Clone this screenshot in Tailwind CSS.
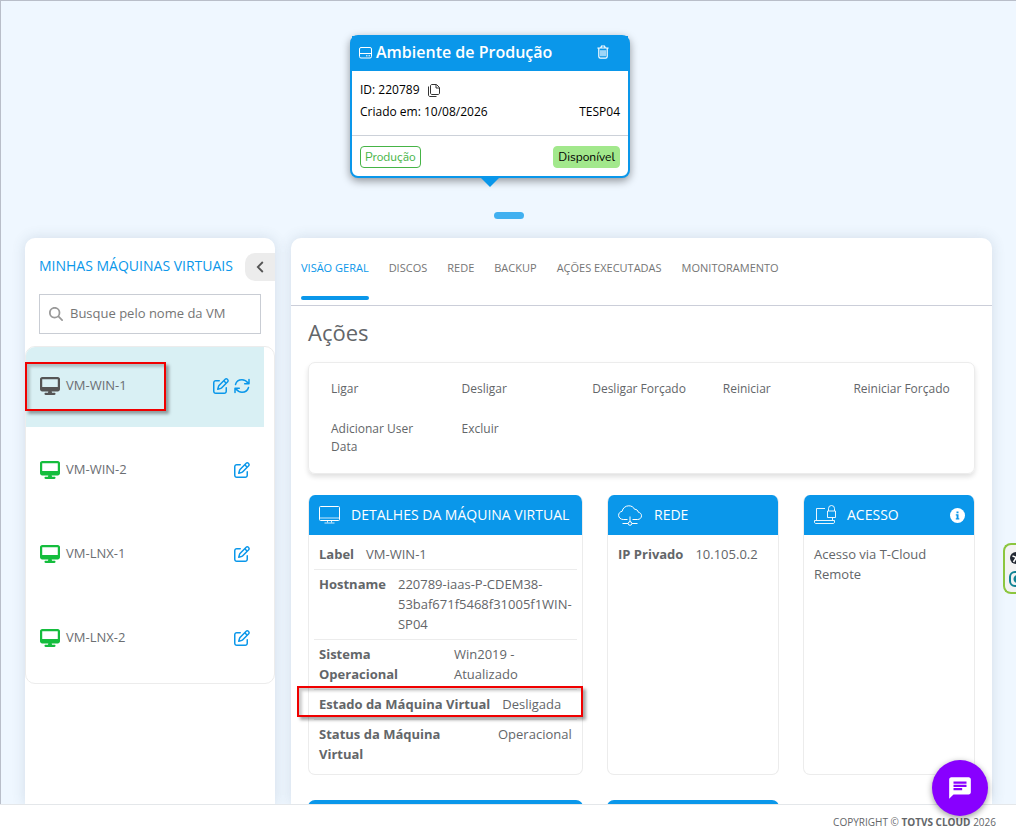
<!DOCTYPE html>
<html lang="pt-BR">
<head>
<meta charset="utf-8">
<meta name="viewport" content="width=device-width, initial-scale=1">
<title>TOTVS Cloud</title>
<script src="https://cdn.jsdelivr.net/npm/@tailwindcss/browser@4"></script>
</head>
<body class="flex h-screen flex-col overflow-hidden bg-white font-['Open_Sans','Noto_Sans',sans-serif] text-[13px] text-[#636669]">
<svg class="hidden" aria-hidden="true">
  <symbol id="desktop" viewBox="0 0 576 512"><path fill="currentColor" d="M64 0C28.7 0 0 28.7 0 64V352c0 35.3 28.7 64 64 64H240l-10.7 32H160c-17.7 0-32 14.3-32 32s14.3 32 32 32H416c17.7 0 32-14.3 32-32s-14.3-32-32-32H346.700L336 416H512c35.300 0 64-28.700 64-64V64c0-35.300-28.700-64-64-64H64zM512 64V288H64V64H512z"/></symbol>
  <symbol id="edit" viewBox="0 0 512 512"><path fill="currentColor" d="M441 58.9L453.1 71c9.4 9.4 9.4 24.6 0 33.9L424 134.1 377.9 88 407 58.9c9.4-9.4 24.6-9.4 33.9 0zM209.800 256.200L344 121.900 390.100 168 255.800 302.200c-2.900 2.900-6.500 5-10.400 6.100l-58.500 16.700 16.700-58.500c1.100-3.900 3.200-7.500 6.100-10.400zM373.100 25L175.800 222.200c-8.700 8.700-15 19.400-18.300 31.100l-28.600 100c-2.400 8.400-.1 17.400 6.100 23.600s15.200 8.500 23.600 6.100l100-28.600c11.800-3.400 22.500-9.700 31.100-18.300L487 138.900c28.100-28.100 28.100-73.700 0-101.800L474.900 25C446.800-3.100 401.200-3.100 373.100 25zM88 64C39.400 64 0 103.400 0 152V424c0 48.600 39.400 88 88 88H360c48.600 0 88-39.400 88-88V312c0-13.300-10.700-24-24-24s-24 10.700-24 24V424c0 22.100-17.900 40-40 40H88c-22.100 0-40-17.900-40-40V152c0-22.100 17.900-40 40-40H200c13.300 0 24-10.700 24-24s-10.700-24-24-24H88z"/></symbol>
</svg>

<main class="relative flex min-h-0 flex-1 flex-col overflow-hidden border-t border-l border-[#b9bec9] bg-[#eff7ff]">
  <!-- Environment carousel -->
  <section class="flex shrink-0 flex-col items-center pt-[34px]">
    <div class="pr-[37px]">
      <article class="relative w-[280px] rounded-[8px] border-2 border-[#0a97ea] bg-white text-[12px] text-black shadow-[0_3px_8px_rgba(0,0,0,0.4)]">
        <header class="-mt-px flex h-[35px] items-center bg-[#0a97ea] pr-[19px] pb-[3px] pl-[7px] text-white">
          <svg class="mr-[4px] h-[13px] w-[13px]" viewBox="0 0 13 13" fill="none" stroke="currentColor"><rect x=".5" y="1.500" width="12" height="10.500" rx="1.500"/><path d="M.5 7.500h12M7 9.800h1.500M9.500 9.800H11"/></svg>
          <h1 class="flex-1 text-[16px] font-semibold">Ambiente de Produção</h1>
          <button aria-label="Excluir ambiente"><svg class="h-[14px] w-[12px]" viewBox="0 0 12 14" fill="none" stroke="currentColor" stroke-width="1.200" stroke-linecap="round"><path d="M.8 3h10.400M3.800 2.800l.7-1.800h3l.7 1.800M1.800 3.200v8.300c0 1 .7 1.700 1.600 1.700h5.200c.9 0 1.600-.7 1.600-1.700V3.200M4 5.500v5.200M6 5.500v5.200M8 5.500v5.200"/></svg></button>
        </header>
        <div class="px-[8px] pt-[8px] pb-[12px] leading-[22px]">
          <div class="flex items-center gap-[8px]"><span>ID: 220789</span>
            <button aria-label="Copiar ID"><svg class="h-[13px] w-[12px]" viewBox="0 0 12 13" fill="none" stroke="#333"><path d="M4 .5h4.500l3 3V9c0 .8-.5 1.500-1.300 1.500H4c-.9 0-1.500-.7-1.500-1.500V2C2.500 1.100 3.100.5 4 .5zM8 .7V4h3.300M.5 2.500V11c0 .9.6 1.500 1.500 1.500h6.500"/></svg></button>
          </div>
          <div class="flex justify-between"><span>Criado em: 10/08/2026</span><span>TESP04</span></div>
        </div>
        <footer class="flex justify-between border-t border-[#ccd1d9] px-[8px] pt-[10px] pb-[8px] font-['Nunito','Lato',sans-serif] leading-[20px]">
          <span class="rounded-[4px] border border-[#46b446] px-[4px] text-[#46b446]">Produção</span>
          <span class="rounded-[4px] border border-[#a2e88c] bg-[#a2e88c] px-[4px]">Disponível</span>
        </footer>
        <svg class="absolute top-full left-1/2 h-[11px] w-[20px] -translate-x-1/2" viewBox="0 0 20 11"><path fill="#0a97ea" d="M0 1h20L10 11z"/></svg>
      </article>
    </div>
    <button aria-label="Página 1" class="mt-[34px] h-[7px] w-[30px] rounded-full bg-[#41b0f0]"></button>
  </section>

  <div class="mt-[19px] flex min-h-0 flex-1 gap-4 px-6">
    <!-- Virtual machine list -->
    <aside class="w-[250px] shrink-0 rounded-t-[10px] bg-white pt-[15px] shadow-[0_0_14px_rgba(60,90,110,0.16)]">
      <div class="flex items-start justify-between pl-[14px]">
        <h2 class="pt-[3px] text-[14px] leading-[20px] whitespace-nowrap text-[#0a97ea]">MINHAS MÁQUINAS VIRTUAIS</h2>
        <button aria-label="Recolher" class="flex h-[28px] w-[30px] items-center justify-center rounded-l-[10px] bg-[#ececec]"><svg class="h-[12px] w-[8px]" viewBox="0 0 8 12" fill="none" stroke="#555" stroke-width="1.800"><path d="M6.800 1L1.800 6l5 5"/></svg></button>
      </div>
      <label class="mx-[14px] mt-[13px] flex h-[40px] items-center gap-[7px] border border-[#c9cdd4] px-[9px]">
        <svg class="h-[14px] w-[14px] shrink-0 text-[#999]" viewBox="0 0 512 512"><path fill="currentColor" d="M416 208c0 45.900-14.900 88.300-40 122.700L502.600 457.400c12.500 12.500 12.500 32.800 0 45.300s-32.800 12.500-45.300 0L330.700 376c-34.400 25.200-76.800 40-122.700 40C93.100 416 0 322.900 0 208S93.100 0 208 0S416 93.100 416 208zM208 352a144 144 0 1 0 0-288 144 144 0 1 0 0 288z"/></svg>
        <input type="text" aria-label="Buscar VM" placeholder="Busque pelo nome da VM" class="min-w-0 flex-1 outline-none placeholder:text-[#757575]">
      </label>
      <ul class="mt-[12px] flex flex-col gap-[4px] rounded-[10px] border border-[#ececec] pr-[10px] pb-[4px] text-[13px] text-[#6b6e72]">
        <li class="relative flex h-[80px] items-center rounded-tl-[9px] bg-[#d9f0f4] px-[14px] pb-[2px]">
          <svg class="mr-[6px] h-[18px] w-[20px] text-[#555]"><use href="#desktop"/></svg>
          <a href="#" class="flex-1">VM-WIN-1</a>
          <button aria-label="Editar VM-WIN-1" class="text-[#0a97ea]"><svg class="block h-[16px] w-[16px]"><use href="#edit"/></svg></button>
          <button aria-label="Atualizar VM-WIN-1" class="ml-[5px] text-[#0a97ea]"><svg class="block h-[16px] w-[16px]" viewBox="0 0 16 16" fill="none" stroke="currentColor" stroke-width="1.500" stroke-linecap="round" stroke-linejoin="round"><path d="M1.500 6.500C2.300 3.600 5 1.800 8 1.800c2.500 0 4.500 1.200 6.500 3.700M15 1.500v4.300h-4.300M14.500 9.500c-.8 2.900-3.500 4.700-6.500 4.700-2.500 0-4.500-1.200-6.500-3.700M1 14.500v-4.300h4.300"/></svg></button>
          <span class="absolute top-[15px] -left-px h-[49px] w-[141px] border-2 border-[#f00000] shadow-[3px_3px_3px_rgba(0,0,0,0.35),inset_3px_3px_3px_rgba(0,0,0,0.2)]"></span>
        </li>
        <li class="flex h-[80px] items-center px-[14px] pb-[2px]">
          <svg class="mr-[6px] h-[18px] w-[20px] text-[#14bd3d]"><use href="#desktop"/></svg>
          <a href="#" class="flex-1">VM-WIN-2</a>
          <button aria-label="Editar VM-WIN-2" class="text-[#0a97ea]"><svg class="block h-[16px] w-[16px]"><use href="#edit"/></svg></button>
        </li>
        <li class="flex h-[80px] items-center px-[14px] pb-[2px]">
          <svg class="mr-[6px] h-[18px] w-[20px] text-[#14bd3d]"><use href="#desktop"/></svg>
          <a href="#" class="flex-1">VM-LNX-1</a>
          <button aria-label="Editar VM-LNX-1" class="text-[#0a97ea]"><svg class="block h-[16px] w-[16px]"><use href="#edit"/></svg></button>
        </li>
        <li class="flex h-[80px] items-center px-[14px] pb-[2px]">
          <svg class="mr-[6px] h-[18px] w-[20px] text-[#14bd3d]"><use href="#desktop"/></svg>
          <a href="#" class="flex-1">VM-LNX-2</a>
          <button aria-label="Editar VM-LNX-2" class="text-[#0a97ea]"><svg class="block h-[16px] w-[16px]"><use href="#edit"/></svg></button>
        </li>
      </ul>
    </aside>

    <!-- Selected machine -->
    <section class="min-w-0 flex-1 rounded-t-[10px] bg-white shadow-[0_0_14px_rgba(60,90,110,0.16)]">
      <nav class="flex h-[68px] items-start gap-[20px] border-b border-[#cbced9] px-[10px] text-[11px] whitespace-nowrap text-[#757575]">
        <a href="#" class="flex h-[62px] flex-col justify-between pt-[20px] leading-[20px] text-[#0a97ea]">VISÃO GERAL<span class="h-[4px] rounded-full bg-[#0a97ea]"></span></a>
        <a href="#" class="pt-[20px] leading-[20px]">DISCOS</a>
        <a href="#" class="pt-[20px] leading-[20px]">REDE</a>
        <a href="#" class="pt-[20px] leading-[20px]">BACKUP</a>
        <a href="#" class="pt-[20px] leading-[20px]">AÇÕES EXECUTADAS</a>
        <a href="#" class="pt-[20px] leading-[20px]">MONITORAMENTO</a>
      </nav>
      <div class="px-[17px] pt-[11px]">
        <h2 class="text-[22px] leading-[30px]">Ações</h2>
        <div class="mt-[15px] grid grid-cols-5 items-start rounded-[7px] border border-[#ececec] p-[6px] text-[12px] leading-[18px] shadow-[0_3px_5px_rgba(0,0,0,0.12)]">
          <button class="py-[11px] pl-[16px] pr-[12px] text-left">Ligar</button>
          <button class="py-[11px] pl-[16px] pr-[12px] text-left">Desligar</button>
          <button class="py-[11px] pl-[16px] pr-[12px] text-left">Desligar Forçado</button>
          <button class="py-[11px] pl-[16px] pr-[12px] text-left">Reiniciar</button>
          <button class="py-[11px] pl-[16px] pr-[12px] text-left">Reiniciar Forçado</button>
          <button class="py-[11px] pl-[16px] pr-[12px] text-left">Adicionar User Data</button>
          <button class="py-[11px] pl-[16px] pr-[12px] text-left">Excluir</button>
        </div>
        <div class="mt-[21px] grid grid-cols-[275fr_172fr_172fr] gap-x-6 gap-y-[25px] leading-[20px]">
          <article class="overflow-hidden rounded-[7px] border border-t-0 border-[#ececec]">
            <h3 class="flex h-[40px] items-center gap-[11px] bg-[#0a97ea] px-[10px] text-[14px] whitespace-nowrap text-white">
              <svg class="h-[20px] w-[21px] shrink-0" viewBox="0 0 21 20" fill="none" stroke="currentColor"><rect x=".5" y="1.500" width="20" height="14" rx="1"/><path d="M1 13h19M8.500 15.500v2M12.500 15.500v2M5.500 18h10" stroke-opacity=".8"/></svg>
              DETALHES DA MÁQUINA VIRTUAL</h3>
            <dl class="px-[5px] pt-[5px] pb-[5px]">
              <div class="flex gap-[12px] border-b border-[#ececec] px-[5px] pt-[4px] pb-[5px]"><dt class="font-bold">Label</dt><dd>VM-WIN-1</dd></div>
              <div class="flex gap-[12px] border-b border-[#ececec] px-[5px] pt-[4px] pb-[5px]"><dt class="font-bold">Hostname</dt><dd>220789-iaas-P-CDEM38-<br>53baf671f5468f31005f1WIN-<br>SP04</dd></div>
              <div class="flex gap-[12px] border-b border-[#ececec] px-[5px] pt-[4px] pb-[5px]"><dt class="w-[123px] shrink-0 font-bold">Sistema Operacional</dt><dd>Win2019 -<br>Atualizado</dd></div>
              <div class="relative flex gap-[12px] border-b border-[#ececec] px-[5px] pt-[4px] pb-[5px]"><dt class="font-bold whitespace-nowrap">Estado da Máquina Virtual</dt><dd>Desligada</dd></div>
              <div class="flex gap-[12px] px-[5px] pt-[4px] pb-[5px]"><dt class="w-[167px] shrink-0 pr-[30px] font-bold">Status da Máquina Virtual</dt><dd>Operacional</dd></div>
            </dl>
          </article>
          <article class="overflow-hidden rounded-[7px] border border-t-0 border-[#ececec]">
            <h3 class="flex h-[40px] items-center gap-[12px] bg-[#0a97ea] px-[10px] text-[14px] text-white">
              <svg class="h-[21px] w-[24px] shrink-0" viewBox="0 0 24 21" fill="none" stroke="currentColor"><path d="M9.500 14.500H5.300C2.600 14.500.6 12.600.6 10.300c0-2.100 1.500-3.700 3.500-4C4.800 3 7.500.8 10.800.8c2.600 0 4.800 1.300 5.800 3.500 2-.1 3.400 1.200 3.700 2.900 1.900.4 3.200 1.800 3.200 3.600 0 2.100-1.700 3.700-4 3.700h-5M12 11.500v5.500M4.500 18.500H10M14 18.500h5.500"/><circle cx="12" cy="18.500" r="1.800"/></svg>
              REDE</h3>
            <dl class="flex gap-[12px] px-[10px] pt-[9px]"><dt class="font-bold">IP Privado</dt><dd>10.105.0.2</dd></dl>
          </article>
          <article class="overflow-hidden rounded-[7px] border border-t-0 border-[#ececec]">
            <h3 class="flex h-[40px] items-center gap-[11px] bg-[#0a97ea] pl-[10px] pr-[9px] text-[14px] text-white">
              <svg class="h-[20px] w-[22px] shrink-0" viewBox="0 0 22 20" fill="none" stroke="currentColor"><path d="M11 3.500H2.500V15M18.500 12.500V15M.5 15.500h20v1.500c0 1-.6 1.500-1.500 1.500H2c-.9 0-1.500-.5-1.500-1.500zM14.500 6V3.500a3 3 0 0 1 6 0V6M13.500 6h8v6.500h-8z" stroke-opacity=".9"/></svg>
              <span class="flex-1">ACESSO</span>
              <button aria-label="Informações"><svg class="block h-[15px] w-[15px]" viewBox="0 0 15 15"><circle cx="7.500" cy="7.500" r="7.500" fill="#fff"/><path fill="#0a97ea" d="M6.500 3.500h2v1.800h-2zM5.800 6.300h2.700v4h.8v1.200H5.800v-1.200h.8V7.500h-.8z"/></svg></button>
            </h3>
            <p class="px-[10px] pt-[9px]">Acesso via T-Cloud Remote</p>
          </article>
          <article class="h-[40px] rounded-t-[7px] bg-[#0a97ea]"></article>
          <article class="h-[40px] rounded-t-[7px] bg-[#0a97ea]"></article>
        </div>
      </div>
    </section>
  </div>
  <span class="absolute top-[685px] left-[296px] h-[31px] w-[286px] border-2 border-[#f00000] shadow-[3px_3px_3px_rgba(0,0,0,0.35),inset_3px_3px_3px_rgba(0,0,0,0.2)]"></span>
</main>

<footer class="flex h-[34px] shrink-0 items-center justify-end border-t border-[#e4e7ea] px-[20px] pt-[2px] text-[10px]"><p>COPYRIGHT © <strong class="font-bold">TOTVS CLOUD</strong> 2026</p></footer>

<!-- Accessibility widget docked at the window edge -->
<div class="fixed top-[543px] right-0 h-[51px] w-[13px] overflow-hidden rounded-l-[8px] border-2 border-r-0 border-[#8cc63f] bg-[#f3f3f3]">
  <svg class="h-[47px] w-[11px]" viewBox="0 0 11 47" fill="none"><circle cx="11" cy="13" r="6" fill="#222933"/><path d="M7.500 11l4 1.500M11 13l-2.500 4" stroke="#fff" stroke-width="1.500"/><rect x="5" y="27" width="14" height="14" rx="5" stroke="#0f8294" stroke-width="2"/><path d="M12 30c-2 0-3.500 2-3.500 4s1.500 4 3.500 4z" fill="#0f8294"/></svg>
</div>
<button aria-label="Abrir chat" class="fixed right-[28px] bottom-[22px] flex h-[56px] w-[56px] items-center justify-center rounded-full bg-[#8800ff] text-white shadow-[0_2px_6px_rgba(0,0,0,0.4)]"><svg class="h-[26px] w-[26px]" viewBox="0 0 24 24"><path fill="currentColor" d="M20 2H4c-1.100 0-1.990.9-1.990 2L2 22l4-4h14c1.100 0 2-.9 2-2V4c0-1.100-.9-2-2-2zM6 9h12v2H6V9zm8 5H6v-2h8v2zm4-6H6V6h12v2z"/></svg></button>
</body>
</html>
